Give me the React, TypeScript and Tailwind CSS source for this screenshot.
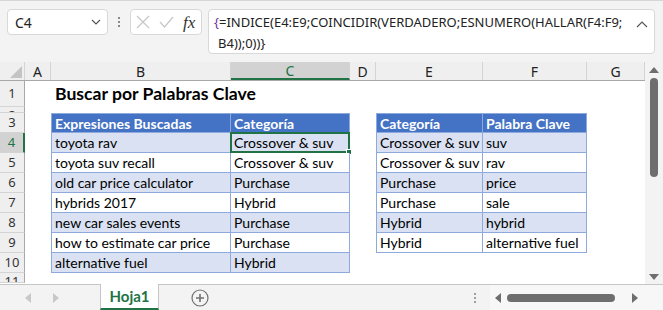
import React from 'react';

const CELL_FONT = "font-['Lato','Liberation_Sans',sans-serif]";
const UI_FONT = "font-['Noto_Sans','Liberation_Sans',sans-serif]";

const colHeaders = [
  { label: 'A', w: 'w-[26px]' },
  { label: 'B', w: 'w-[180px]' },
  { label: 'C', w: 'w-[119px]', active: true },
  { label: 'D', w: 'w-[26px]' },
  { label: 'E', w: 'w-[107px]' },
  { label: 'F', w: 'w-[104px]' },
  { label: 'G', w: 'w-[58px]' },
];

const left = [
  ['toyota rav', 'Crossover & suv'],
  ['toyota suv recall', 'Crossover & suv'],
  ['old car price calculator', 'Purchase'],
  ['hybrids 2017', 'Hybrid'],
  ['new car sales events', 'Purchase'],
  ['how to estimate car price', 'Purchase'],
  ['alternative fuel', 'Hybrid'],
];

const right = [
  ['Crossover & suv', 'suv'],
  ['Crossover & suv', 'rav'],
  ['Purchase', 'price'],
  ['Purchase', 'sale'],
  ['Hybrid', 'hybrid'],
  ['Hybrid', 'alternative fuel'],
];

const RowHead: React.FC<{ n: number; h: string; active?: boolean; top?: boolean }> = ({ n, h, active, top }) => (
  <div
    className={`${h} w-[25px] shrink-0 flex justify-center overflow-hidden leading-none border-b border-[#d4d4d4] text-[13px] ${UI_FONT} ${
      top ? 'items-start pt-[2px]' : 'items-center'
    } ${active ? 'bg-[#d2d2d2] text-[#217346] border-r-2 border-r-[#217346]' : 'bg-[#efefef] text-[#333] border-r border-r-[#a8a8a8]'}`}
  >
    {n}
  </div>
);

const Cell: React.FC<{ w: string; kind?: 'head' | 'band' | 'plain'; first?: boolean; top?: boolean; children?: React.ReactNode; selected?: boolean }> = ({
  w,
  kind,
  first,
  top,
  children,
  selected,
}) => {
  const bg = kind === 'head' ? 'bg-[#4472c4] text-white font-bold' : kind === 'band' ? 'bg-[#d9e1f2] text-black' : kind === 'plain' ? 'bg-white text-black' : '';
  const borders = kind ? `border-r border-b border-[#8ea9db] ${first ? 'border-l' : ''} ${top ? 'border-t' : ''}` : '';
  return (
    <div className={`${w} shrink-0 h-full relative flex items-center pl-[3px] whitespace-nowrap text-[14px] ${CELL_FONT} ${bg} ${borders}`}>
      {children}
      {selected && (
        <div className="absolute -left-px -top-px -right-px -bottom-px border-2 border-[#217346]">
          <div className="absolute -right-[4px] -bottom-[4px] w-[6px] h-[6px] bg-[#217346] border border-white" />
        </div>
      )}
    </div>
  );
};

export default function App() {
  return (
    <div className="w-[663px] h-[310px] bg-[#f3f3f3] overflow-hidden flex flex-col border-t border-[#d6d6d6]">
      {/* formula bar */}
      <div className="h-[61px] shrink-0 flex items-start pt-[8px] pl-[7px]">
        <div className={`w-[101px] h-[26px] bg-white rounded-[4px] border border-[#d8d8d8] flex items-center justify-between pl-[7px] pr-[6px] text-[14px] text-[#222] ${UI_FONT}`}>
          <span>C4</span>
          <svg width="10" height="6" viewBox="0 0 10 6">
            <path d="M1 1l4 4 4-4" fill="none" stroke="#555" strokeWidth="1.2" />
          </svg>
        </div>
        <div className="w-[22px] h-[26px] flex flex-col items-center justify-center gap-[2px]">
          <span className="w-[2px] h-[2px] bg-[#8a8a8a]" />
          <span className="w-[2px] h-[2px] bg-[#8a8a8a]" />
          <span className="w-[2px] h-[2px] bg-[#8a8a8a]" />
        </div>
        <div className="w-[72px] h-[26px] bg-white rounded-[4px] border border-[#d8d8d8] flex items-center pl-[5px] gap-[9px]">
          <svg width="14" height="14" viewBox="0 0 14 14">
            <path d="M1 1l12 12M13 1L1 13" stroke="#c6c6c6" strokeWidth="1.2" />
          </svg>
          <svg width="15" height="12" viewBox="0 0 15 12">
            <path d="M1 6l4.5 5L14 1" fill="none" stroke="#c6c6c6" strokeWidth="1.2" />
          </svg>
          <span className="font-['Liberation_Serif',serif] italic text-[17px] text-[#333] leading-none">fx</span>
        </div>
        <div className={`ml-[6px] w-[447px] h-[45px] bg-white rounded-[4px] border border-[#d8d8d8] flex justify-between pl-[5px] pr-[6px] pt-[2px] text-[13px] leading-[21px] text-[#222] ${UI_FONT}`}>
          <div>
            <div>
              <span className="text-[#7030a0]">{'{'}</span>=INDICE(E4:E9;COINCIDIR(VERDADERO;ESNUMERO(HALLAR(F4:F9;
            </div>
            <div className="pl-[4px]">
              B4));0)){'}'}
            </div>
          </div>
          <svg width="12" height="8" viewBox="0 0 12 8" className="mt-[8px]">
            <path d="M1 7l5-5 5 5" fill="none" stroke="#555" strokeWidth="1.2" />
          </svg>
        </div>
      </div>

      {/* sheet area */}
      <div className="flex h-[222px] shrink-0">
        <div className="w-[645px] shrink-0 flex flex-col bg-white">
          {/* column headers */}
          <div className={`flex h-[19px] shrink-0 bg-[#efefef] border-b border-[#a8a8a8] text-[14px] text-[#222] ${UI_FONT}`}>
            <div className="w-[25px] shrink-0 border-r border-[#d4d4d4] relative">
              <svg width="12" height="12" viewBox="0 0 12 12" className="absolute right-[2px] bottom-[2px]">
                <path d="M12 0V12H0Z" fill="#c4c4c4" />
              </svg>
            </div>
            {colHeaders.map((c) => (
              <div
                key={c.label}
                className={`${c.w} shrink-0 flex items-center justify-center border-r border-[#d4d4d4] ${
                  c.active ? 'bg-[#d2d2d2] text-[#217346] border-b-2 border-b-[#217346]' : ''
                }`}
              >
                {c.label}
              </div>
            ))}
          </div>

          {/* row 1 */}
          <div className="flex h-[26px] shrink-0">
            <RowHead n={1} h="h-[26px]" />
            <div className="w-[26px] shrink-0" />
            <div className={`pl-[4px] flex items-center text-[17.6px] font-bold text-black whitespace-nowrap ${CELL_FONT}`}>Buscar por Palabras Clave</div>
          </div>
          {/* row 2 */}
          <div className="flex h-[6px] shrink-0">
            <RowHead n={2} h="h-[6px]" top />
          </div>
          {/* row 3 */}
          <div className="flex h-[20px] shrink-0">
            <RowHead n={3} h="h-[20px]" />
            <Cell w="w-[26px]" />
            <Cell w="w-[180px]" kind="head" first top>Expresiones Buscadas</Cell>
            <Cell w="w-[119px]" kind="head" top>Categoría</Cell>
            <Cell w="w-[26px]" />
            <Cell w="w-[107px]" kind="head" first top>Categoría</Cell>
            <Cell w="w-[104px]" kind="head" top>Palabra Clave</Cell>
          </div>
          {left.map(([b, c], i) => {
            const kind = i % 2 === 0 ? 'band' : 'plain';
            const r = right[i];
            return (
              <div key={i} className="flex h-[20px] shrink-0">
                <RowHead n={i + 4} h="h-[20px]" active={i === 0} />
                <Cell w="w-[26px]" />
                <Cell w="w-[180px]" kind={kind} first>{b}</Cell>
                <Cell w="w-[119px]" kind={kind} selected={i === 0}>{c}</Cell>
                <Cell w="w-[26px]" />
                {r && (
                  <>
                    <Cell w="w-[107px]" kind={kind} first>{r[0]}</Cell>
                    <Cell w="w-[104px]" kind={kind}>{r[1]}</Cell>
                  </>
                )}
              </div>
            );
          })}
          {/* row 11 */}
          <div className="flex h-[10px] shrink-0">
            <RowHead n={11} h="h-[10px]" top />
          </div>
        </div>

        {/* vertical scrollbar */}
        <div className="w-[18px] shrink-0 bg-[#f3f3f3] flex flex-col items-center pt-[5px] pb-[4px]">
          <svg width="10" height="6" viewBox="0 0 10 6">
            <path d="M5 0L10 6H0Z" fill="#6e6e6e" />
          </svg>
          <div className="mt-[5px] w-[8px] h-[99px] rounded-full bg-[#6e6e6e]" />
          <div className="flex-1" />
          <svg width="10" height="6" viewBox="0 0 10 6">
            <path d="M0 0H10L5 6Z" fill="#6e6e6e" />
          </svg>
        </div>
      </div>

      {/* sheet tabs */}
      <div className="flex-1 flex items-stretch border-t border-[#c6c6c6]">
        <div className="w-[100px] shrink-0 flex items-center pl-[25px] gap-[22px]">
          <svg width="6" height="10" viewBox="0 0 6 10">
            <path d="M6 0V10L0 5Z" fill="#c8c8c8" />
          </svg>
          <svg width="6" height="10" viewBox="0 0 6 10">
            <path d="M0 0V10L6 5Z" fill="#c8c8c8" />
          </svg>
        </div>
        <div className={`w-[59px] -mt-px bg-white border-x border-[#c6c6c6] border-b-2 border-b-[#217346] flex items-center justify-center text-[15px] font-bold text-[#217346] ${CELL_FONT}`}>
          Hoja1
        </div>
        <div className="w-[82px] flex items-center justify-center">
          <svg width="18" height="18" viewBox="0 0 18 18">
            <circle cx="9" cy="9" r="8" fill="none" stroke="#707070" strokeWidth="1.2" />
            <path d="M9 5v8M5 9h8" stroke="#707070" strokeWidth="1.6" />
          </svg>
        </div>
        <div className="flex-1" />
        <div className="w-[20px] flex flex-col justify-center gap-[2px] pl-[4px]">
          <span className="w-[2px] h-[2px] bg-[#a0a0a0]" />
          <span className="w-[2px] h-[2px] bg-[#a0a0a0]" />
          <span className="w-[2px] h-[2px] bg-[#a0a0a0]" />
        </div>
        <div className="w-[173px] flex items-center pl-[5px] bg-[#f7f7f7]">
          <svg width="6" height="10" viewBox="0 0 6 10">
            <path d="M6 0V10L0 5Z" fill="#6e6e6e" />
          </svg>
          <div className="ml-[6px] w-[108px] h-[8px] rounded-full bg-[#6e6e6e]" />
          <div className="w-[17px]" />
          <svg width="6" height="10" viewBox="0 0 6 10">
            <path d="M0 0V10L6 5Z" fill="#6e6e6e" />
          </svg>
        </div>
      </div>
    </div>
  );
}
